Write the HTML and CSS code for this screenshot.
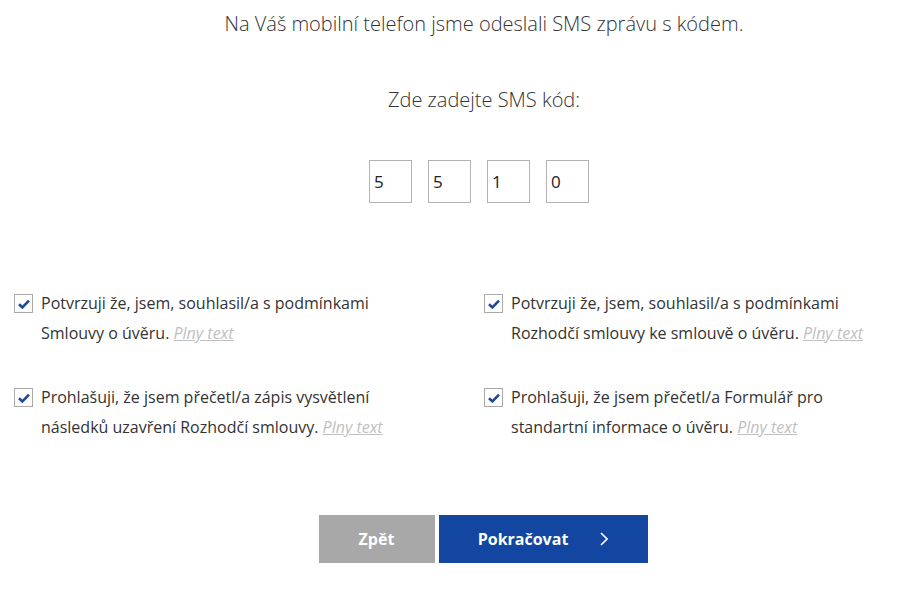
FILE: index.html
```html
<!DOCTYPE html>
<html lang="cs">
<head>
    <meta charset="UTF-8">
    <meta name="viewport" content="width=device-width, initial-scale=1.0">
    <title>SMS ověření</title>
    <link rel="stylesheet" href="styles.css">
</head>
<body>
    <div class="container">
        <p class="lead">Na Váš mobilní telefon jsme odeslali SMS zprávu s kódem.</p>
        <p class="lead code-label">Zde zadejte SMS kód:</p>

        <div class="code-inputs">
            <input type="text" class="code-digit" value="5" maxlength="1">
            <input type="text" class="code-digit" value="5" maxlength="1">
            <input type="text" class="code-digit" value="1" maxlength="1">
            <input type="text" class="code-digit" value="0" maxlength="1">
        </div>

        <div class="agreements">
            <label class="agree">
                <span class="check">
                    <svg viewBox="0 0 12 10" width="12" height="10"><path d="M1 5.2 L4.4 8.4 L11 1.6" /></svg>
                </span>
                <span class="agree-text">Potvrzuji že, jsem, souhlasil/a s podmínkami Smlouvy o úvěru. <a href="#" class="full-text">Plny text</a></span>
            </label>
            <label class="agree">
                <span class="check">
                    <svg viewBox="0 0 12 10" width="12" height="10"><path d="M1 5.2 L4.4 8.4 L11 1.6" /></svg>
                </span>
                <span class="agree-text">Potvrzuji že, jsem, souhlasil/a s podmínkami Rozhodčí smlouvy ke smlouvě o úvěru. <a href="#" class="full-text">Plny text</a></span>
            </label>
            <label class="agree">
                <span class="check">
                    <svg viewBox="0 0 12 10" width="12" height="10"><path d="M1 5.2 L4.4 8.4 L11 1.6" /></svg>
                </span>
                <span class="agree-text">Prohlašuji, že jsem přečetl/a zápis vysvětlení následků uzavření Rozhodčí smlouvy. <a href="#" class="full-text">Plny text</a></span>
            </label>
            <label class="agree">
                <span class="check">
                    <svg viewBox="0 0 12 10" width="12" height="10"><path d="M1 5.2 L4.4 8.4 L11 1.6" /></svg>
                </span>
                <span class="agree-text">Prohlašuji, že jsem přečetl/a Formulář pro standartní informace o úvěru. <a href="#" class="full-text">Plny text</a></span>
            </label>
        </div>

        <div class="actions">
            <button class="btn btn-back">Zpět</button>
            <button class="btn btn-next">Pokračovat
                <svg class="chevron" viewBox="0 0 8 14" width="8" height="14"><path d="M1 1 L7 7 L1 13" /></svg>
            </button>
        </div>
    </div>
</body>
</html>
```

FILE: styles.css
```css
body {
    margin: 0;
    padding: 0;
    background-color: #ffffff;
    font-family: "Open Sans", Arial, sans-serif;
    color: #333333;
    overflow: hidden;
}

.container {
    width: 940px;
    margin-left: 14px;
    padding-top: 9px;
}

.lead {
    margin: 0;
    text-align: center;
    font-size: 20px;
    font-weight: 300;
    line-height: 30px;
    color: #333333;
}

.code-label {
    margin-top: 46px;
}

.code-inputs {
    display: flex;
    justify-content: center;
    gap: 16px;
    margin-top: 45px;
    padding-right: 10px;
}

.code-digit {
    width: 43px;
    height: 43px;
    box-sizing: border-box;
    border: 1px solid #b3b3b3;
    padding: 0 0 0 4px;
    font-family: "Open Sans", Arial, sans-serif;
    font-size: 17px;
    color: #222222;
    outline: none;
}

.agreements {
    display: grid;
    grid-template-columns: 470px 470px;
    row-gap: 40px;
    margin-top: 91px;
}

.agree {
    display: flex;
    gap: 8px;
    cursor: pointer;
}

.check {
    flex: 0 0 auto;
    width: 19px;
    height: 19px;
    box-sizing: border-box;
    border: 1px solid #a9a9a9;
    background: #ffffff;
    display: flex;
    align-items: center;
    justify-content: center;
}

.check svg path {
    fill: none;
    stroke: #1b4a9c;
    stroke-width: 2.6;
}

.agree-text {
    max-width: 370px;
    font-size: 16px;
    line-height: 30px;
    margin-top: -6px;
}

.full-text {
    color: #c0c0c0;
    font-style: italic;
    text-decoration: underline;
}

.actions {
    display: flex;
    justify-content: center;
    gap: 4px;
    margin-top: 73px;
    padding-right: 2px;
}

.btn {
    height: 48px;
    border: none;
    font-family: "Open Sans", Arial, sans-serif;
    font-size: 16px;
    font-weight: 700;
    color: #ffffff;
    cursor: pointer;
}

.btn-back {
    width: 116px;
    background-color: #a8a8a8;
}

.btn-next {
    width: 209px;
    background-color: #1246a0;
    display: flex;
    align-items: center;
    justify-content: center;
    gap: 32px;
    padding: 0;
}

.chevron path {
    fill: none;
    stroke: #ffffff;
    stroke-width: 1.6;
}
```
